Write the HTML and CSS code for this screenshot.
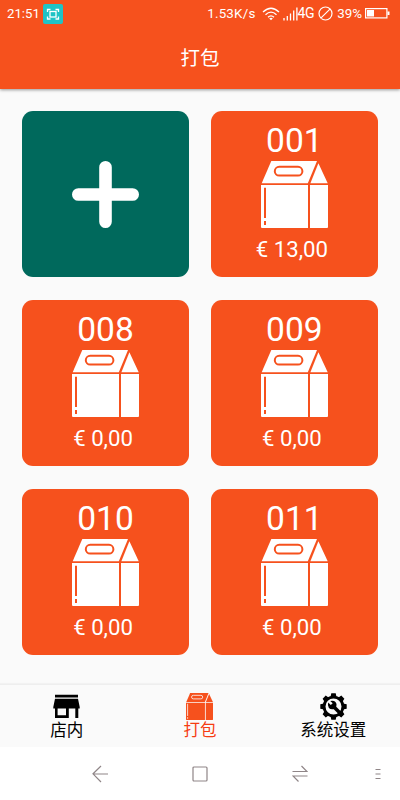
FILE: index.html
```html
<!DOCTYPE html>
<html lang="zh">
<head>
    <meta charset="UTF-8">
    <title>打包</title>
    <link rel="stylesheet" href="styles.css">
</head>
<body>
    <svg class="defs">
        <symbol id="box" viewBox="0 0 67 67">
            <path d="M10.3 0H56L46.8 22.3H.7Z"/>
            <path d="M57.4 2.3L66.7 22.3H49.4Z"/>
            <path d="M0 24H47V67H1Q0 67 0 66Z"/>
            <path d="M49 24H67V66Q67 67 66 67H49Z"/>
            <rect class="line" x="13.8" y="5.8" width="27.6" height="8.8" rx="4.4"/>
            <path class="line" d="M4 26.8V57M4 60V64"/>
        </symbol>
    </svg>
    <header>
        <div class="status">
            <span class="time">21:51</span>
            <svg class="shot" width="20" height="20" viewBox="0 0 20 20">
                <rect width="20" height="20" rx="2" fill="#1fc3c5"/>
                <path d="M4.5 8V5.5H7.5M12.5 5.5H15.5V8M15.5 12.5V15H12.5M7.5 15H4.5V12.5" fill="none" stroke="#fff" stroke-width="1.3"/>
                <rect x="7" y="7.5" width="6" height="5.5" fill="none" stroke="#fff" stroke-width="1.3"/>
            </svg>
            <span class="speed">1.53K/s</span>
            <svg class="wifi" width="18" height="14" viewBox="0 0 18 14">
                <path d="M1 5Q9-2.5 17 5M3.5 7.7Q9 2.5 14.5 7.7M6 10.3Q9 7.5 12 10.3" fill="none" stroke="#fff" stroke-width="1.3"/>
                <path d="M7.2 11.5Q9 10 10.8 11.5L9 13.3Z" fill="#fff"/>
            </svg>
            <svg class="signal" width="15" height="14" viewBox="0 0 15 14">
                <path d="M1 11V13.5M4.3 9V13.5M7.5 6.5V13.5M10.7 3.5V13.5M13.9 .5V13.5" stroke="#fff" stroke-width="1.3"/>
            </svg>
            <span class="net">4G</span>
            <svg class="mute" width="15" height="15" viewBox="0 0 15 15">
                <path d="M2.8 12.2L12.2 2.8M14 7.5A6.5 6.5 0 1 1 1 7.5A6.5 6.5 0 1 1 14 7.5Z" fill="none" stroke="#fff" stroke-width="1.2"/>
            </svg>
            <span class="percent">39%</span>
            <svg class="battery" width="25" height="11" viewBox="0 0 25 11">
                <rect x=".6" y=".6" width="21.3" height="9.3" fill="none" stroke="#fff" stroke-width="1.2"/>
                <path d="M2 2H9V8.5H2ZM22.5 3.5H24.5V7H22.5Z" fill="#fff"/>
            </svg>
        </div>
        <h1>打包</h1>
    </header>
    <main>
        <div class="card add">
            <svg width="67" height="67" viewBox="0 0 67 67">
                <path d="M33.5 6.3V60.7M6.3 33.5H60.7" stroke="#fff" stroke-width="12.6" stroke-linecap="round"/>
            </svg>
        </div>
        <div class="card">
            <h2>001</h2>
            <svg class="box"><use href="#box"/></svg>
            <p>€ 13,00</p>
        </div>
        <div class="card">
            <h2>008</h2>
            <svg class="box"><use href="#box"/></svg>
            <p>€ 0,00</p>
        </div>
        <div class="card">
            <h2>009</h2>
            <svg class="box"><use href="#box"/></svg>
            <p>€ 0,00</p>
        </div>
        <div class="card">
            <h2>010</h2>
            <svg class="box"><use href="#box"/></svg>
            <p>€ 0,00</p>
        </div>
        <div class="card">
            <h2>011</h2>
            <svg class="box"><use href="#box"/></svg>
            <p>€ 0,00</p>
        </div>
    </main>
    <nav class="tabs">
        <div class="tab">
            <svg width="27" height="27" viewBox="0 0 27 27">
                <path d="M2 1.7H25V4.5H2ZM2 5.7H25L26.7 14V15.5H25.3V25H22.3V15.5H15.8V25H2V15.5H.3V14ZM4.6 15.5V22.3H13V15.5Z" fill-rule="evenodd"/>
            </svg>
            <span>店内</span>
        </div>
        <div class="tab active">
            <svg class="box" width="27" height="27"><use href="#box"/></svg>
            <span>打包</span>
        </div>
        <div class="tab">
            <svg width="27" height="27" viewBox="0 0 27 27">
                <circle cx="13.5" cy="13.5" r="9.4" fill="none" stroke="#000" stroke-width="2.8"/>
                <g id="teeth">
                    <path id="tooth" d="M10.5 4L11.3 .3H15.7L16.5 4ZM10.5 23L11.3 26.7H15.7L16.5 23Z"/>
                    <use href="#tooth" transform="rotate(45 13.5 13.5)"/>
                </g>
                <use href="#teeth" transform="rotate(90 13.5 13.5)"/>
                <path d="M13 13L21 21" stroke="#000" stroke-width="3.6"/>
                <path d="M8.2 9.6L10.8 12L12.7 10.3L10.2 8Q13.5 7 15.5 9Q17.3 11 16.3 13.5L13.5 16.2Q10.5 16.8 8.9 15Q7.2 12.8 8.2 9.6Z"/>
            </svg>
            <span>系统设置</span>
        </div>
    </nav>
    <footer>
        <svg width="16" height="18" viewBox="0 0 16 18">
            <path d="M9 1L1 8.8L9 17M1 9H16"/>
        </svg>
        <svg width="16" height="16" viewBox="0 0 16 16">
            <rect x="1" y="1" width="14" height="14" rx="1"/>
        </svg>
        <svg width="16" height="18" viewBox="0 0 16 18">
            <path d="M.5 6.5H15L9.5 1M15.5 11H1L6.5 16.5"/>
        </svg>
        <svg class="more" width="6" height="12" viewBox="0 0 6 12">
            <path d="M.5 1.5H5.5M.5 6H5.5M.5 10.5H5.5"/>
        </svg>
    </footer>
</body>
</html>
```
FILE: styles.css
```css
body {
    margin: 0;
    height: 800px;
    display: flex;
    flex-direction: column;
    overflow: hidden;
    background-color: #fafafa;
    font-family: Roboto, "Noto Sans CJK SC", sans-serif;
}

.defs {
    display: none;
}

header {
    height: 89px;
    flex: none;
    background-color: #f6511d;
    color: white;
    box-shadow: 0 1px 3px rgba(0, 0, 0, 0.4);
}

.status {
    height: 27px;
    display: flex;
    align-items: center;
    padding: 0 10px 0 7px;
    font-size: 13.4px;
    line-height: 27px;
}

.shot {
    margin-left: 3px;
}

.time {
    font-size: 13.2px;
}

.speed {
    margin-left: auto;
    letter-spacing: 0.2px;
}

.wifi {
    margin-left: 6px;
}

.signal {
    margin-left: 3px;
}

.net {
    font-size: 14px;
    letter-spacing: -0.4px;
}

.mute {
    margin: 0 4px;
}

.battery {
    margin-left: 3px;
}

h1 {
    margin: 0;
    font-size: 19.5px;
    font-weight: 400;
    line-height: 64px;
    text-align: center;
}

main {
    flex: 1;
    display: grid;
    grid-template-columns: 166.5px 166.5px;
    grid-auto-rows: 165.5px;
    gap: 23.5px 22.3px;
    padding: 22px 22.3px 0;
}

.card {
    display: flex;
    flex-direction: column;
    align-items: center;
    border-radius: 11px;
    background-color: #f6511d;
    color: white;
    --line: #f6511d;
}

.add {
    justify-content: center;
    padding-top: 1px;
    box-sizing: border-box;
    background-color: #00695c;
}

.box {
    fill: currentColor;
}

.card .box {
    width: 67px;
    height: 67px;
}

.line {
    fill: none;
    stroke: var(--line);
    stroke-width: 2px;
}

h2 {
    margin: 10px 0 0;
    font-size: 33.5px;
    font-weight: 400;
    line-height: 40px;
}

p {
    margin: 8px 0 0;
    padding-right: 5px;
    font-size: 22.2px;
    line-height: 26px;
}

.tabs {
    height: 62px;
    flex: none;
    display: grid;
    grid-template-columns: repeat(3, 1fr);
    border-top: 1px solid #eee;
    box-shadow: 0 -1px 1px #f2f2f2;
}

.tab {
    display: flex;
    flex-direction: column;
    align-items: center;
    padding-top: 8px;
    font-size: 16.5px;
    line-height: 22px;
}

.tab svg {
    flex: none;
}

.active {
    color: #f63c12;
    --line: #fafafa;
}

.active .box {
    fill: #f6511d;
}

footer {
    height: 53px;
    flex: none;
    display: flex;
    align-items: center;
    gap: 84px;
    padding-left: 92px;
    background-color: white;
}

footer svg {
    flex: none;
    fill: none;
    stroke: #8f8587;
    stroke-width: 1.2px;
}

footer .more {
    margin-left: -17px;
}
```
